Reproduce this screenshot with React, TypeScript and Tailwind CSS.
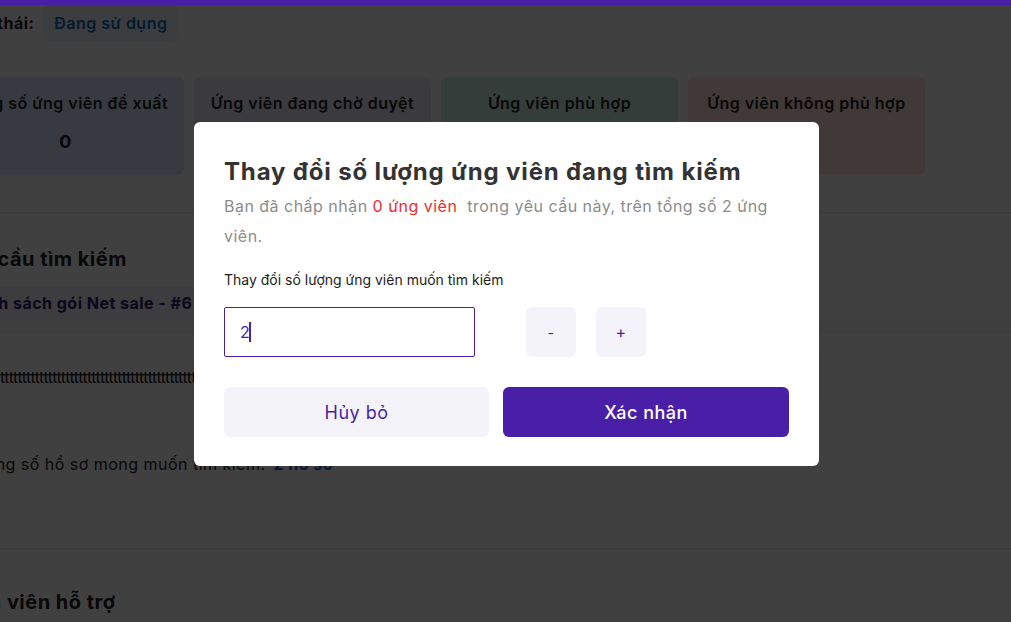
import React from 'react';

const font = { fontFamily: 'Inter, "Noto Sans", sans-serif' };

function StatCard({ title, value, tone }: { title: string; value?: string; tone: string }) {
  return (
    <div className={`w-[237px] h-[98px] shrink-0 rounded-md flex flex-col items-center pt-[14px] ${tone}`}>
      <div className="text-[16px] font-semibold text-[#222] whitespace-nowrap">{title}</div>
      {value && <div className="mt-[13px] text-[18px] font-bold text-[#222]">{value}</div>}
    </div>
  );
}

export default function App() {
  return (
    <div className="relative w-[1011px] h-[622px] overflow-hidden bg-white tracking-[0.03em]" style={font}>
      {/* Page behind the dialog */}
      <div className="pt-[5px]">
        <div className="flex items-center h-[37px] mt-[-1px] ml-[-55px] gap-[9px]">
          <span className="text-[16px] font-bold text-[#222]">Trạng thái:</span>
          <span className="h-[36px] px-[11px] flex items-center rounded-md bg-[#eef3fb] text-[16px] font-semibold text-[#1565c0]">
            Đang sử dụng
          </span>
        </div>

        <div className="flex gap-[10px] ml-[-53px] mt-[36px]">
          <StatCard title="Tổng số ứng viên đề xuất" value="0" tone="bg-[#dbe8ff]" />
          <StatCard title="Ứng viên đang chờ duyệt" tone="bg-[#e9e5f8]" />
          <StatCard title="Ứng viên phù hợp" tone="bg-[#cdf4e8]" />
          <StatCard title="Ứng viên không phù hợp" tone="bg-[#ffe1d9]" />
        </div>

        <div className="mt-[37px] border-t border-[#e8e8e8]" />

        <div className="mt-[32px] ml-[-46px] text-[20px] font-bold text-[#222] leading-[28px]">Yêu cầu tìm kiếm</div>

        <div className="mt-[14px] h-[32px] w-[600px] flex items-center bg-[#f2eefa]">
          <span className="ml-[-34px] text-[16px] font-bold text-[#2d1b69] whitespace-nowrap">
            Danh sách gói Net sale - #6
          </span>
        </div>
        <div className="h-[15px] bg-[#f8f8f8]" />
        <div className="h-[23px] bg-white" />
        <div className="h-[40px] flex items-center bg-[#fafafa] overflow-hidden">
          <span className="text-[16px] text-[#111] whitespace-nowrap tracking-[-0.5px]">
            ttttttttttttttttttttttttttttttttttttttttttttttttttttttttttttttttttttttttttttttttttttttttttttttttttt
          </span>
        </div>
        <div className="h-[47px] bg-white" />
        <div className="h-[40px] flex items-center bg-white">
          <span className="ml-[-24px] text-[16px] text-[#222] whitespace-nowrap">
            Tổng số hồ sơ mong muốn tìm kiếm:
            <span className="ml-[8px] font-bold text-[#1565c0]">2 hồ sơ</span>
          </span>
        </div>
        <div className="h-[64px] bg-[#fbfbfb]" />
        <div className="border-t border-[#e4e4e4]" />
        <div className="mt-[39px] ml-[-52px] text-[20px] leading-[28px] font-bold text-[#222]">Nhân viên hỗ trợ</div>
      </div>

      {/* Overlay */}
      <div className="absolute inset-0 bg-black/75" />
      <div className="absolute top-0 left-0 right-0 h-[5px] bg-[#4a1fa8]" />

      {/* Dialog */}
      <div className="absolute inset-0 flex justify-start pl-[194px] pt-[122px]">
        <div className="w-[625px] h-[344px] bg-white rounded-md px-[30px] pt-[34px]">
          <h2 className="text-[24px] leading-[32px] font-bold text-[#333] whitespace-nowrap tracking-[0.035em]">
            Thay đổi số lượng ứng viên đang tìm kiếm
          </h2>
          <p className="mt-[3px] text-[16px] leading-[30px] text-[#8c8c8c]">
            Bạn đã chấp nhận <span className="text-[#f02d2d]">0 ứng viên</span>{'\u00a0 '}trong yêu cầu này, trên tổng số 2 ứng viên.
          </p>
          <div className="mt-[19px] text-[14px] leading-[20px] text-[#222] tracking-normal">
            Thay đổi số lượng ứng viên muốn tìm kiếm
          </div>
          <div className="mt-[17px] flex items-center">
            <div className="w-[251px] h-[50px] border border-[#4a1fa8] rounded-[2px] flex items-center pl-[15px]">
              <span className="text-[16px] text-[#4a1fa8]">2</span>
              <span className="w-[1.5px] h-[20px] bg-[#4a1fa8] ml-[-1px]" />
            </div>
            <button className="ml-[51px] w-[50px] h-[50px] rounded-md bg-[#f5f3fa] text-[#4a1fa8] text-[14px]">-</button>
            <button className="ml-[20px] w-[50px] h-[50px] rounded-md bg-[#f5f3fa] text-[#4a1fa8] text-[16px]">+</button>
          </div>
          <div className="mt-[30px] flex gap-[14px]">
            <button className="w-[265px] h-[50px] rounded-md bg-[#f5f3fa] text-[18px] text-[#4a1fa8]">Hủy bỏ</button>
            <button className="w-[286px] h-[50px] rounded-md bg-[#4a1fa8] text-[18px] font-medium text-white">Xác nhận</button>
          </div>
        </div>
      </div>
    </div>
  );
}
